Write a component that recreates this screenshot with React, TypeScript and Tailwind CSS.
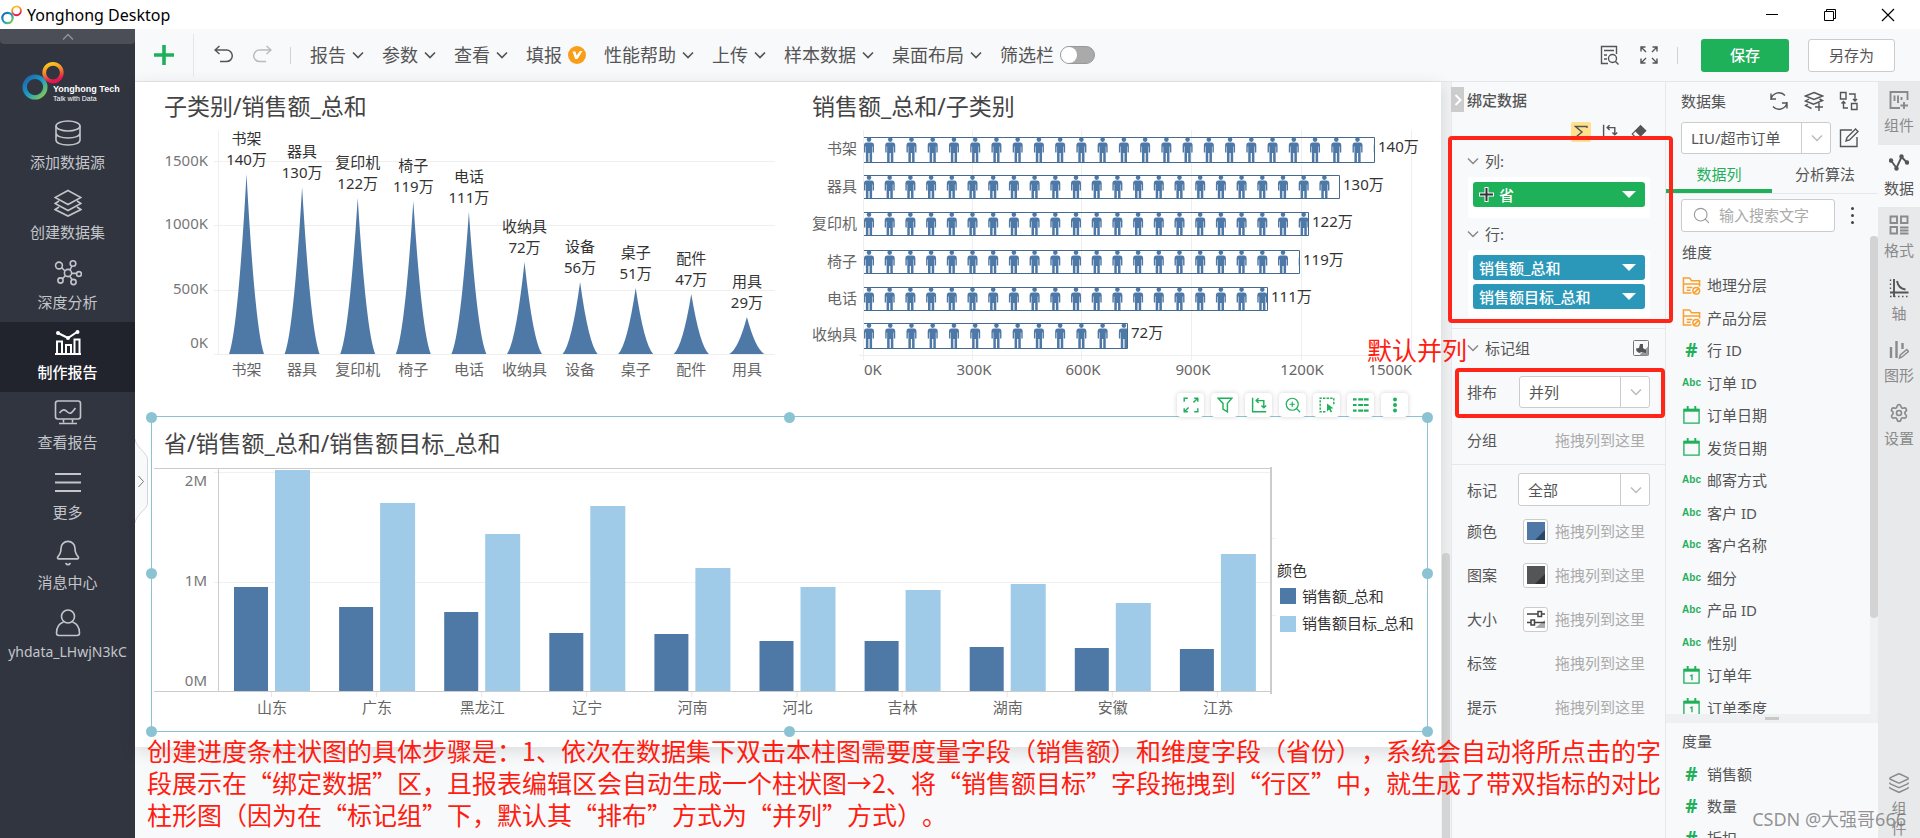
import type { ReactNode } from 'react'
import { Bell, Layers, Search, Settings, ZoomIn } from 'lucide-react'

const BLUE = '#4e79a7'
const LIGHT_BLUE = '#a0cbe8'

const menus = ['报告', '参数', '查看', '填报', '性能帮助', '上传', '样本数据', '桌面布局']

const cones = [
  { name: '书架', value: '140万', top: 174 },
  { name: '器具', value: '130万', top: 187 },
  { name: '复印机', value: '122万', top: 198 },
  { name: '椅子', value: '119万', top: 201 },
  { name: '电话', value: '111万', top: 212 },
  { name: '收纳具', value: '72万', top: 262 },
  { name: '设备', value: '56万', top: 282 },
  { name: '桌子', value: '51万', top: 288 },
  { name: '配件', value: '47万', top: 294 },
  { name: '用具', value: '29万', top: 317 },
]

const people = [
  { name: '书架', value: '140万', top: 137, height: 26, right: 1375, step: 21.24 },
  { name: '器具', value: '130万', top: 175, height: 24, right: 1340, step: 20.7 },
  { name: '复印机', value: '122万', top: 212, height: 24, right: 1309, step: 20.7 },
  { name: '椅子', value: '119万', top: 250, height: 24, right: 1300, step: 20.7 },
  { name: '电话', value: '111万', top: 287, height: 24, right: 1268, step: 20.7 },
  { name: '收纳具', value: '72万', top: 323, height: 26, right: 1128, step: 21.24 },
]

const provinces = [
  { name: '山东', sales: 587, target: 470 },
  { name: '广东', sales: 607, target: 503 },
  { name: '黑龙江', sales: 612, target: 534 },
  { name: '辽宁', sales: 633, target: 506 },
  { name: '河南', sales: 634, target: 568 },
  { name: '河北', sales: 641, target: 587 },
  { name: '吉林', sales: 641, target: 590 },
  { name: '湖南', sales: 647, target: 584 },
  { name: '安徽', sales: 648, target: 603 },
  { name: '江苏', sales: 649, target: 554 },
]

const dimensions = [
  { kind: 'folder', name: '地理分层' },
  { kind: 'folder', name: '产品分层' },
  { kind: 'number', name: '行 ID' },
  { kind: 'text', name: '订单 ID' },
  { kind: 'date', name: '订单日期' },
  { kind: 'date', name: '发货日期' },
  { kind: 'text', name: '邮寄方式' },
  { kind: 'text', name: '客户 ID' },
  { kind: 'text', name: '客户名称' },
  { kind: 'text', name: '细分' },
  { kind: 'text', name: '产品 ID' },
  { kind: 'text', name: '性别' },
  { kind: 'day', name: '订单年' },
  { kind: 'day', name: '订单季度' },
]

const measures = ['销售额', '数量', '折扣']

function Icon({ size = 20, box = 20, width = 1.4, children }: { size?: number; box?: number; width?: number; children: ReactNode }) {
  return (
    <svg width={size} height={size} viewBox={`0 0 ${box} ${box}`} fill="none" stroke="currentColor" strokeWidth={width} className="shrink-0" aria-hidden="true">
      {children}
    </svg>
  )
}

function Chevron({ className = '', width = 1.5 }: { className?: string; width?: number }) {
  return (
    <svg width="12" height="8" viewBox="0 0 12 8" fill="none" stroke="currentColor" strokeWidth={width} className={`shrink-0 ${className}`} aria-hidden="true">
      <path d="m1 1.500 5 5 5-5" />
    </svg>
  )
}

function Rings({ className }: { className: string }) {
  return (
    <svg viewBox="0 0 40 38" className={className} fill="none" aria-hidden="true">
      <defs>
        <linearGradient id="cool" x1="0" y1="0" x2="1" y2="1">
          <stop offset="0" stopColor="#1d62ad" />
          <stop offset="0.5" stopColor="#1d9bc4" />
          <stop offset="1" stopColor="#8fcf4b" />
        </linearGradient>
        <linearGradient id="warm" x1="0" y1="0" x2="0.3" y2="1">
          <stop offset="0" stopColor="#fbd21a" />
          <stop offset="0.5" stopColor="#f28a2c" />
          <stop offset="1" stopColor="#e8154f" />
        </linearGradient>
      </defs>
      <circle cx="28.200" cy="11.400" r="8" stroke="url(#warm)" strokeWidth="3.400" />
      <circle cx="11.800" cy="24.500" r="9.400" stroke="url(#cool)" strokeWidth="4" />
    </svg>
  )
}

const navItems = [
  {
    label: '添加数据源',
    icon: (
      <Icon size={28} box={28} width={1.6}>
        <ellipse cx="14" cy="7" rx="12" ry="5" />
        <path d="M2 7v14c0 3 5 5 12 5s12-2 12-5V7M2 14c0 3 5 5 12 5s12-2 12-5" />
      </Icon>
    ),
  },
  {
    label: '创建数据集',
    icon: (
      <Icon size={28} box={28} width={1.6}>
        <path d="M14 1.500 27 8.500 14 15.500 1 8.500zM5 12l-4 2.500L14 21.500 27 14.500 23 12M5 18l-4 2.500L14 27 27 20.500 23 18" />
      </Icon>
    ),
  },
  {
    label: '深度分析',
    icon: (
      <Icon size={28} box={28} width={1.6}>
        <circle cx="14" cy="14" r="3.6" />
        <circle cx="5" cy="6.500" r="3.400" />
        <circle cx="19" cy="4.500" r="2.800" />
        <circle cx="25" cy="15" r="2.400" />
        <circle cx="6.500" cy="21.500" r="2.600" />
        <circle cx="19.500" cy="23" r="2.600" />
        <path d="M7.500 8.500 11 12M16 11l2-4M17.600 14.400h5M11.500 16.500l-3 3.200M15.800 17.200l2.400 3.500" />
      </Icon>
    ),
  },
  {
    label: '制作报告',
    active: true,
    icon: (
      <Icon size={28} box={28} width={2}>
        <path d="M1 25h26M3 25V12.500h5V25M12 25v-9h5v9M20.500 25V10.500h5V25M4 4l10 5 9-6" />
        <circle cx="4" cy="4" r="1" fill="currentColor" />
        <circle cx="14" cy="9" r="1" fill="currentColor" />
        <circle cx="23.500" cy="3" r="1" fill="currentColor" />
      </Icon>
    ),
  },
  {
    label: '查看报告',
    icon: (
      <Icon size={28} box={28} width={1.6}>
        <rect x="1.500" y="2" width="25" height="18" rx="2.500" />
        <path d="M5.500 14c3-4 5-4 8-1s5 0 8-4M9.500 20.500v3M18.500 20.500v3M5 24.500h18" />
      </Icon>
    ),
  },
  {
    label: '更多',
    icon: (
      <Icon size={28} box={28} width={1.8}>
        <path d="M1 5h26M1 13.500h26M1 22h26" />
      </Icon>
    ),
  },
  { label: '消息中心', icon: <Bell size={28} strokeWidth={1.4} /> },
  {
    label: 'yhdata_LHwjN3kC',
    icon: (
      <Icon size={28} box={28} width={1.6}>
        <circle cx="14" cy="7.500" r="6.500" />
        <path d="M9.500 13C5 14.500 2.500 19 2.500 24q0 2.500 2.500 2.500h18q2.500 0 2.500-2.500c0-5-2.500-9.500-7-11" />
      </Icon>
    ),
  },
]

function TitleBar() {
  return (
    <header className="flex h-[29px] shrink-0 items-center bg-white text-black">
      <Rings className="ml-px h-[22px] w-[22px]" />
      <span className="ml-1 text-base">Yonghong Desktop</span>
      <div className="ml-auto flex gap-[34px] pr-5">
        <button type="button" aria-label="最小化" className="flex w-6 justify-center">
          <Icon size={14} box={14} width={1}><path d="M1 6.500h12" /></Icon>
        </button>
        <button type="button" aria-label="还原" className="flex w-6 justify-center">
          <Icon size={14} box={14} width={1}><path d="M1.500 3.500h9v9h-9zM3.500 3.500v-2h9v9h-2" /></Icon>
        </button>
        <button type="button" aria-label="关闭" className="flex w-6 justify-center">
          <Icon size={14} box={14} width={1.2}><path d="M1 1l12 12M13 1 1 13" /></Icon>
        </button>
      </div>
    </header>
  )
}

function Sidebar() {
  return (
    <aside className="w-[135px] shrink-0 bg-[#313540] text-[#c3c5c9]">
      <button type="button" aria-label="收起" className="flex h-[15px] w-full items-center justify-center rounded-b bg-[#4b4d57] text-[#90929a]">
        <Chevron className="rotate-180" />
      </button>
      <div className="flex h-[68px] pt-4 pl-[22px]">
        <Rings className="h-[42px] w-[44px] shrink-0" />
        <div className="-ml-[13px] pt-6 font-['Liberation_Sans'] text-white">
          <div className="text-[9px] leading-[11px] font-bold whitespace-nowrap">Yonghong Tech</div>
          <div className="text-[7px] leading-2 whitespace-nowrap">Talk with Data</div>
        </div>
      </div>
      <nav>
        {navItems.map((item) => (
          <a
            key={item.label}
            href="#"
            className={`flex h-[70px] flex-col items-center pt-[7px] text-[15px] ${item.active ? 'bg-[#22242d] font-medium text-white' : ''}`}
          >
            {item.icon}
            <span className={`mt-1 leading-[22px] ${item.label.startsWith('yh') ? 'text-sm' : ''}`}>{item.label}</span>
          </a>
        ))}
      </nav>
    </aside>
  )
}

function Toolbar() {
  return (
    <div className="flex h-[53px] shrink-0 items-center border-b border-[#e4e6ec] bg-[#f8f9fb] text-[#555]">
      <button type="button" aria-label="新建" className="flex w-[58px] justify-center text-[#1fb05a]">
        <Icon size={22} box={22} width={3.6}><path d="M11 1v20M1 11h20" /></Icon>
      </button>
      <span className="h-[43px] w-px bg-[#e4e6ea]" />
      <button type="button" aria-label="撤销" className="ml-5">
        <Icon width={1.5}><path d="M5.500 1 1 5l4.500 4M1 5h11.500a5.800 5.800 0 0 1 0 11.600H6" /></Icon>
      </button>
      <button type="button" aria-label="重做" className="ml-[18px] text-[#bbb]">
        <Icon width={1.5}><path d="M14.500 1 19 5l-4.500 4M19 5H7.500a5.800 5.800 0 0 0 0 11.600H14" /></Icon>
      </button>
      <span className="ml-[18px] h-[17px] w-px bg-[#d0d2d6]" />
      <div className="ml-[19px] flex items-center gap-[18px] text-lg whitespace-nowrap">
        {menus.map((menu) => (
          <button key={menu} type="button" className="flex items-center gap-[6px]">
            {menu}
            {menu === '填报' ? (
              <svg width="18" height="18" viewBox="0 0 18 18" aria-hidden="true">
                <circle cx="9" cy="9" r="9" fill="#fa9e18" />
                <path d="M4.500 5.500h3l1 4 3.500-4.500h2.500L9.500 13H7.200z" fill="#fff" />
              </svg>
            ) : (
              <Chevron width={1.7} />
            )}
          </button>
        ))}
        <label className="flex items-center gap-[6px]">
          筛选栏
          <input type="checkbox" className="peer sr-only" />
          <span className="flex h-[18px] w-[35px] items-center rounded-full border border-[#999] bg-[#aaa]">
            <span className="h-4 w-4 rounded-full bg-white" />
          </span>
        </label>
      </div>
      <div className="ml-auto flex items-center pr-[25px]">
        <button type="button" aria-label="预览">
          <Icon>
            <path d="M8 18.500H1.500v-17h15V9M4 5.500h10M4 10h3M4 14h3" />
            <circle cx="12.500" cy="13.500" r="4" />
            <path d="m15.500 16.500 3 3" />
          </Icon>
        </button>
        <button type="button" aria-label="全屏" className="ml-[19px]">
          <Icon><path d="M2 6.500V2h4.500M2 2l5 5M13.500 2H18v4.500M18 2l-5 5M2 13.500V18h4.500M2 18l5-5M18 13.500V18h-4.500M18 18l-5-5" /></Icon>
        </button>
        <span className="ml-[18px] h-[17px] w-px bg-[#d0d2d6]" />
        <button type="button" className="ml-[23px] h-[33px] w-[88px] rounded-[3px] bg-[#1fb05a] text-[15px] font-medium text-white">保存</button>
        <button type="button" className="ml-[19px] h-[33px] w-[87px] rounded-[3px] border border-[#ccc] bg-white text-[15px]">另存为</button>
      </div>
    </div>
  )
}

function ConeChart() {
  const grid = [
    { label: '1500K', y: 161, text: 161 },
    { label: '1000K', y: 225, text: 224 },
    { label: '500K', y: 290, text: 289 },
    { label: '0K', y: 354, text: 343 },
  ]
  return (
    <svg viewBox="135 122 653 282" className="block w-full" fontSize="15" fill="#666">
      <path d="M218.500 131v224" stroke="#efefef" />
      {grid.map((g) => (
        <g key={g.label}>
          <path d={`M214 ${g.y + 0.5}h561`} stroke="#efefef" />
          <text x="208" y={g.text + 5} textAnchor="end" fill="#777">{g.label}</text>
        </g>
      ))}
      {cones.map((c, i) => {
        const x = 246.5 + i * 55.6
        const h = 354 - c.top
        return (
          <g key={c.name} textAnchor="middle">
            <path
              d={`M${x - 17.5} 354Q${x - 8.5} ${354 - h * 0.14} ${x} ${c.top}Q${x + 8.5} ${354 - h * 0.14} ${x + 17.5} 354z`}
              fill={BLUE}
            />
            <text x={x} y={c.top - 30} fill="#333">{c.name}</text>
            <text x={x} y={c.top - 9} fill="#333">{c.value}</text>
            <text x={x} y="375">{c.name}</text>
          </g>
        )
      })}
    </svg>
  )
}

function PeopleChart() {
  const ticks = [
    { label: '0K', x: 864, text: 864, anchor: 'start' },
    { label: '300K', x: 973, text: 974, anchor: 'middle' },
    { label: '600K', x: 1082, text: 1083, anchor: 'middle' },
    { label: '900K', x: 1192, text: 1193, anchor: 'middle' },
    { label: '1200K', x: 1302, text: 1302, anchor: 'middle' },
    { label: '1500K', x: 1412, text: 1412, anchor: 'end' },
  ] as const
  return (
    <svg viewBox="788 122 653 282" className="block w-full" fontSize="15" fill="#666">
      <defs>
        <g id="person" fill={BLUE}>
          <circle cx="5" cy="2.600" r="2.300" />
          <path d="M2.500 5.500h5q2.500 0 2.500 3v7H8.600V9.500h-.5V25H5.600v-9h-1.200v9H1.900V9.500h-.5v6H0v-7q0-3 2.500-3z" />
        </g>
      </defs>
      <path d="M859 355.500h553" stroke="#efefef" />
      {ticks.map((t) => (
        <g key={t.label}>
          <path d={`M${t.x - 0.5} 130v230`} stroke="#efefef" />
          <text x={t.text} y="375" textAnchor={t.anchor}>{t.label}</text>
        </g>
      ))}
      {people.map((p) => {
        const width = p.right - 864
        const count = Math.ceil(width / p.step)
        return (
          <g key={p.name}>
            <text x="857" y={p.top + 17} textAnchor="end">{p.name}</text>
            <svg x="864" y={p.top} width={width} height={p.height}>
              {Array.from({ length: count }, (_, i) => (
                <use key={i} href="#person" x={i * p.step} y="0" />
              ))}
            </svg>
            <path d={`M864 ${p.top + 0.5}H${p.right - 0.5}v${p.height - 1}H864`} fill="none" stroke="#446a92" />
            <text x={p.right + 3} y={p.top + 15} fill="#333">{p.value}</text>
          </g>
        )
      })}
    </svg>
  )
}

function ProvinceChart() {
  return (
    <svg viewBox="152 465 1275 266" className="block w-full" fontSize="15" fill="#666">
      <path d="M214 472.500h1057M214 582.500h1057" stroke="#f0f0f0" />
      <path d="M1271 538.500h5M1271 615.500h5" stroke="#f0f0f0" />
      <path d="M154 468.500h1117M218.500 468v224" stroke="#ccc" fill="none" />
      <path d="M1271 467v227" stroke="#ccc" strokeWidth="2" />
      <text x="207" y="486" textAnchor="end" fill="#777">2M</text>
      <text x="207" y="586" textAnchor="end" fill="#777">1M</text>
      <text x="207" y="686" textAnchor="end" fill="#777">0M</text>
      {provinces.map((p, i) => {
        const x = 234 + i * 105.1
        return (
          <g key={p.name}>
            <rect x={x} y={p.sales} width="34" height={691 - p.sales} fill={BLUE} />
            <rect x={x + 41} y={p.target} width="35" height={691 - p.target} fill={LIGHT_BLUE} />
            <path d={`M${x + 37.5} 692v5`} stroke="#e6e6e6" />
            <text x={x + 38} y="713" textAnchor="middle">{p.name}</text>
          </g>
        )
      })}
      <path d="M154 691.500h1117" stroke="#ccc" />
      <g fill="#333">
        <text x="1277" y="576">颜色</text>
        <text x="1302" y="602">销售额_总和</text>
        <text x="1302" y="629">销售额目标_总和</text>
      </g>
      <rect x="1280" y="588" width="16" height="16" fill={BLUE} />
      <rect x="1280" y="616" width="16" height="16" fill={LIGHT_BLUE} />
    </svg>
  )
}

const chartTools = [
  { label: '放大', icon: <path d="M1.500 6V1.500H6M14 1.500h4.500V6M18 2l-5 5M18.500 14v4.500H14M6 18.500H1.500V14M2 18l5-5" /> },
  { label: '筛选', icon: <path d="M1.500 1.500h17L13 8v10.500L7.500 15V8z" /> },
  { label: '转置', icon: <path d="M2 1v17.500h17M9.500 1.500 6.500 4.500l3 3M7 4.500h9v9M13 10.500l3 3 3-3" /> },
  { label: '缩放', icon: null },
  {
    label: '选择',
    icon: (
      <>
        <path d="M18.500 9V1.500h-17v17H9" strokeDasharray="3 1.500" />
        <path d="m10 8 8 6-3.500.7 2 3.600-1.800 1-2-3.600L10 18z" fill="currentColor" stroke="none" />
      </>
    ),
  },
  { label: '明细', icon: <path d="M0 3h4.500M6.500 3H20M0 10h4.500M6.500 10H20M0 17h4.500M6.500 17H20" strokeWidth="2.600" strokeDasharray="6 1" /> },
  {
    label: '更多操作',
    icon: (
      <g fill="currentColor" stroke="none">
        <circle cx="10" cy="3" r="2.500" />
        <circle cx="10" cy="10" r="2.500" />
        <circle cx="10" cy="17" r="2.500" />
      </g>
    ),
  },
]

const handles = [
  '-left-[6px] -top-[5px]',
  'left-1/2 -ml-[6px] -top-[5px]',
  '-right-[6px] -top-[5px]',
  '-left-[6px] top-1/2 -mt-[6px]',
  '-right-[6px] top-1/2 -mt-[6px]',
  '-left-[6px] -bottom-[6px]',
  'left-1/2 -ml-[6px] -bottom-[6px]',
  '-right-[6px] -bottom-[6px]',
]

function Canvas() {
  return (
    <main className="relative flex min-w-0 flex-1 flex-col bg-[#f8f9fb]">
      <div className="relative bg-white pb-[15px] shadow-[0_4px_16px_rgba(0,0,0,0.12)]">
        <div className="grid grid-cols-2">
          <section>
            <h2 className="pt-2 pl-[29px] text-[23px] leading-8 text-[#444]">子类别/销售额_总和</h2>
            <ConeChart />
          </section>
          <section>
            <h2 className="pt-2 pl-6 text-[23px] leading-8 text-[#444]">销售额_总和/子类别</h2>
            <PeopleChart />
          </section>
        </div>
        <section className="relative mt-3 mr-[13px] ml-4 border border-[#8cc3d3] bg-white">
          <h2 className="px-3 pt-[10px] pb-[6px] text-[23px] leading-8 text-[#444]">省/销售额_总和/销售额目标_总和</h2>
          <ProvinceChart />
          <div className="absolute right-[19px] bottom-full flex gap-[7px]">
            {chartTools.map((tool) => (
              <button
                key={tool.label}
                type="button"
                aria-label={tool.label}
                className="flex h-6 w-[27px] items-center justify-center rounded bg-white text-[#1fb05a] shadow-[0_0_5px_rgba(0,0,0,0.18)]"
              >
                {tool.icon ? <Icon size={16} width={1.8}>{tool.icon}</Icon> : <ZoomIn size={18} strokeWidth={1.6} />}
              </button>
            ))}
          </div>
          {handles.map((h) => (
            <span key={h} className={`absolute h-[11px] w-[11px] rounded-full bg-[#8cc3d3] ${h}`} />
          ))}
        </section>
      </div>
      <button type="button" aria-label="展开" className="absolute top-[356px] left-0 text-[#888]">
        <svg width="14" height="86" viewBox="0 0 14 86" fill="none" stroke="#d3d6dc" aria-hidden="true">
          <path d="M0 1c1 8 12 14 12.500 20v45C12 71 1 77 0 85" fill="#f8f9fb" />
          <path d="m3.500 38 5 5.500-5 5.500" stroke="#777" />
        </svg>
      </button>
      <p className="absolute top-[652px] left-3 z-20 font-['Noto_Sans_CJK_SC',sans-serif] text-[25px] leading-8 whitespace-nowrap text-[#ff1c10] [text-spacing-trim:space-all]">
        创建进度条柱状图的具体步骤是：1、依次在数据集下双击本柱图需要度量字段（销售额）和维度字段（省份），系统会自动将所点击的字
        <br />
        段展示在“绑定数据”区，且报表编辑区会自动生成一个柱状图→2、将“销售额目标”字段拖拽到“行区”中，就生成了带双指标的对比
        <br />
        柱形图（因为在“标记组”下，默认其“排布”方式为“并列”方式）。
      </p>
    </main>
  )
}

function Select({ label, value, className }: { label: string; value: string; className: string }) {
  return (
    <div className={`relative ${className}`}>
      <select aria-label={label} className="h-full w-full appearance-none rounded-[3px] border border-[#ccc] bg-white pl-[9px] text-[15px] text-[#555]">
        <option>{value}</option>
      </select>
      <span className="pointer-events-none absolute inset-y-0 right-0 flex w-[30px] items-center justify-center border-l border-[#ccc] text-[#bbb]">
        <Chevron />
      </span>
    </div>
  )
}

function Pill({ name, color, dragging }: { name: string; color: string; dragging?: boolean }) {
  return (
    <button type="button" className={`flex h-[25px] items-center rounded-[3px] pr-[9px] pl-[6px] text-[15px] font-medium text-white ${color}`}>
      {dragging && (
        <svg width="15" height="15" viewBox="0 0 15 15" className="mr-[5px]" aria-hidden="true">
          <path d="M7.500 0v15M0 7.500h15" stroke="#fff" strokeWidth="4" />
          <path d="M7.500 1v13M1 7.500h13" stroke="#333" strokeWidth="2" />
        </svg>
      )}
      {name}
      <svg width="14" height="7" viewBox="0 0 14 7" className="ml-auto" aria-hidden="true">
        <path d="M0 0h14L7 7z" fill="#fff" />
      </svg>
    </button>
  )
}

function GroupTitle({ children }: { children: ReactNode }) {
  return (
    <button type="button" className="flex items-center gap-[6px] text-[#555]">
      <Chevron className="text-[#888]" />
      {children}
    </button>
  )
}

function MarkRow({ label, swatch }: { label: string; swatch?: ReactNode }) {
  return (
    <div className="flex h-11 items-center pr-5 pl-[15px]">
      <span>{label}</span>
      {swatch && (
        <button type="button" aria-label={label} className="ml-[26px] flex h-[25px] w-[25px] items-center justify-center rounded-[3px] border border-[#ccc] bg-white">
          {swatch}
        </button>
      )}
      <span className="ml-auto text-[#aaa]">拖拽列到这里</span>
    </div>
  )
}

function BindPanel() {
  return (
    <section className="relative w-[215px] shrink-0 border-x border-[#e6e7ea] bg-[#f8f9fb] text-[15px] leading-[22px] text-[#555]">
      <div className="flex h-9 items-center pl-[15px]">
        <button type="button" aria-label="折叠面板" className="absolute top-[5px] -left-px flex h-[25px] w-[13px] items-center justify-center bg-[#ccc] text-white">
          <Chevron className="-rotate-90" width={2} />
        </button>
        <h3 className="font-medium">绑定数据</h3>
      </div>
      <div className="flex h-7 items-center justify-end gap-[9px] pr-4">
        <button type="button" aria-label="聚合" className="flex h-5 w-5 items-center justify-center rounded-[2px] bg-[#ffe08c]">
          <Icon size={14} box={14}><path d="M13 3V1.500H1.500L8 7l-6.500 5.500H13V11" /></Icon>
        </button>
        <button type="button" aria-label="行列转置" className="flex w-5 justify-center">
          <Icon size={16} width={1.8}><path d="M2 1v17.500h17M9.500 1.500 6.500 4.500l3 3M7 4.500h9v9M13 10.500l3 3 3-3" /></Icon>
        </button>
        <button type="button" aria-label="清除" className="flex w-5 justify-center">
          <Icon size={16}>
            <path d="M12 2 18.500 8.500 12 15 5.500 8.500z" fill="currentColor" />
            <path d="M5.500 8.500 1.500 12.500 6 17h3.500l2.500-2" />
          </Icon>
        </button>
      </div>
      <div className="flex h-[30px] items-center pl-[15px]"><GroupTitle>列:</GroupTitle></div>
      <div className="mt-px mr-[15px] ml-4 flex h-[41px] flex-col rounded-[3px] bg-white p-[5px]">
        <Pill name="省" color="bg-[#1fb05a]" dragging />
      </div>
      <div className="flex h-8 items-center pl-[15px]"><GroupTitle>行:</GroupTitle></div>
      <div className="mr-[15px] mb-[10px] ml-4 flex h-[68px] flex-col gap-1 rounded-[3px] bg-white p-[5px]">
        <Pill name="销售额_总和" color="bg-[#2b98ba]" />
        <Pill name="销售额目标_总和" color="bg-[#2b98ba]" />
      </div>
      <div className="flex h-[38px] items-center justify-between border-t border-[#e6e7ea] pr-4 pl-[15px]">
        <GroupTitle>标记组</GroupTitle>
        <button type="button" aria-label="图表类型">
          <svg width="16" height="16" viewBox="0 0 16 16" aria-hidden="true">
            <rect x="0.500" y="0.500" width="15" height="15" rx="1" fill="#f8f9fb" stroke="#777" />
            <path d="M6 15.500 15.500 6v9.500z" fill="#999" />
            <path d="M3 8.500 6 8l1-4h3v4l3 2v3l-4-1-3 1-2.500-2z" fill="#555" />
          </svg>
        </button>
      </div>
      <div className="flex h-[50px] items-center justify-between pt-[2px] pr-[15px] pl-[15px]">
        <span>排布</span>
        <Select label="排布" value="并列" className="h-8 w-[131px]" />
      </div>
      <div className="flex h-[49px] items-center justify-between border-b border-[#e6e7ea] pr-5 pl-[15px]">
        <span>分组</span>
        <span className="text-[#aaa]">拖拽列到这里</span>
      </div>
      <div className="flex h-11 items-center justify-between pt-[5px] pr-[15px] pl-[15px]">
        <span>标记</span>
        <Select label="标记" value="全部" className="h-[33px] w-[132px]" />
      </div>
      <MarkRow
        label="颜色"
        swatch={<svg width="18" height="18" aria-hidden="true"><path d="M0 0h18v18H0z" fill={BLUE} /><path d="M18 8v10H8z" fill="#2c4766" /></svg>}
      />
      <MarkRow
        label="图案"
        swatch={<svg width="18" height="18" aria-hidden="true"><path d="M0 0h18v18H0z" fill="#555" /><path d="M18 8v10H8z" fill="#333" /></svg>}
      />
      <MarkRow
        label="大小"
        swatch={
          <svg width="18" height="18" fill="none" stroke="#444" strokeWidth="1.500" aria-hidden="true">
            <path d="M18 10v8H8z" fill="#aaa" stroke="none" />
            <path d="M0 4h10.500M14.500 4H18M0 12.500h4M8 12.500h10M11 1.500h3.500v5H11zM4 10h3.500v5H4z" />
          </svg>
        }
      />
      <MarkRow label="标签" />
      <MarkRow label="提示" />
      <div className="pointer-events-none absolute top-[54px] -left-1 z-10 h-[187px] w-[225px] rounded border-4 border-[#ff2518]" />
      <div className="pointer-events-none absolute top-[286px] left-[3px] z-10 h-[50px] w-[210px] rounded border-4 border-[#ff2518]" />
      <span className="absolute top-[252px] right-[198px] z-10 text-[25px] leading-8 whitespace-nowrap text-[#ff1c10]">默认并列</span>
    </section>
  )
}

function FieldIcon({ kind }: { kind: string }) {
  if (kind === 'number') return <span className="w-[19px] text-center text-[19px] font-bold text-[#1fb05a]">#</span>
  if (kind === 'text') return <span className="w-[19px] text-center font-['Liberation_Sans'] text-[10px] font-bold text-[#1fb05a]">Abc</span>
  if (kind === 'folder') {
    return (
      <span className="text-[#f7a131]">
        <Icon size={19} width={1.6}>
          <path d="M10 18H1.500V2H8l2 3h8.500v6M1.500 8.500h17M5 12h6M5 15h4" />
          <circle cx="15" cy="15.500" r="3.500" />
          <path d="m12.500 18 5-5" />
        </Icon>
      </span>
    )
  }
  return (
    <span className="text-[#1fb05a]">
      <Icon size={19} width={1.4}>
        <path d="M2 3.500h16v14.500H2z" />
        <path d="M2 4.500h16" strokeWidth="3" />
        <path d="M6 0v4M14 0v4" strokeWidth="2" />
        {kind === 'day' && <path d="M8.500 10.500 10.500 9.500V15" />}
      </Icon>
    </span>
  )
}

function Field({ kind, name }: { kind: string; name: string }) {
  return (
    <li className="flex items-center gap-[6px] pl-4">
      <FieldIcon kind={kind} />
      {name}
    </li>
  )
}

function DataPanel() {
  return (
    <section className="flex w-[212px] shrink-0 flex-col bg-[#f8f9fb] text-[15px] leading-[22px] text-[#555]">
      <div className="flex h-10 shrink-0 items-center pr-[19px] pb-[2px] pl-[15px]">
        <h3 className="mr-auto">数据集</h3>
        <div className="flex gap-[15px]">
          <button type="button" aria-label="刷新">
            <Icon><path d="M2 9a8 8 0 0 1 14-4.500M18 11a8 8 0 0 1-14 4.500M2 2.500V8h5M18 17.500V12h-5" /></Icon>
          </button>
          <button type="button" aria-label="添加数据集">
            <Icon><path d="M10 1.500 18.500 5 10 8.500 1.500 5zM5 8 1.500 10l8 3.200 9-3.700L15.500 8M4 13l-2.500 1.500 6 3M15 12v8M11 16h8" /></Icon>
          </button>
          <button type="button" aria-label="切换数据集">
            <Icon><path d="M1.500 1.500H7V8H1.500zM12.500 12.500H18V18.500h-5.500zM10 3H16v6.500M14 8l2 2 2-2M4.500 10.500V17H9M2.500 12.500l2-2 2 2" /></Icon>
          </button>
        </div>
      </div>
      <div className="flex h-8 shrink-0 items-center justify-between pr-[19px] pl-[15px]">
        <Select label="数据集" value="LIU/超市订单" className="h-8 w-[150px]" />
        <button type="button" aria-label="编辑">
          <Icon><path d="M13 2H1.500v16.500H18V9M7 13l1-3.500 8.500-8.500 2.500 2.500-8.500 8.500z" /></Icon>
        </button>
      </div>
      <div className="grid h-10 shrink-0 grid-cols-2 border-b border-[#e6e7ea]">
        <button type="button" className="border-b-4 border-[#1fb05a] pt-1 text-[#1fb05a]">数据列</button>
        <button type="button" className="border-b-4 border-transparent pt-1">分析算法</button>
      </div>
      <div className="flex h-[42px] shrink-0 items-center pl-[15px]">
        <label className="flex h-[33px] w-[154px] items-center gap-2 rounded-[3px] border border-[#ccc] bg-white pr-2 pl-[10px]">
          <Search size={19} strokeWidth={1.4} className="shrink-0 text-[#999]" />
          <input type="text" aria-label="搜索" placeholder="输入搜索文字" className="w-full min-w-0 outline-none placeholder:text-[#aaa]" />
        </label>
        <button type="button" aria-label="更多" className="ml-4 flex flex-col gap-1">
          <span className="h-[3px] w-[3px] rounded-full bg-[#444]" />
          <span className="h-[3px] w-[3px] rounded-full bg-[#444]" />
          <span className="h-[3px] w-[3px] rounded-full bg-[#444]" />
        </button>
      </div>
      <div className="flex min-h-0 flex-1">
        <div className="min-w-0 flex-1 overflow-hidden">
          <h4 className="h-[33px] pl-4 leading-8">维度</h4>
          <ul className="grid h-[455px] auto-rows-fr">
            {dimensions.map((d) => <Field key={d.name} {...d} />)}
          </ul>
        </div>
        <div className="w-2 bg-[#f0f1f3]">
          <div className="h-4/5 rounded-full bg-[#d3d3d3]" />
        </div>
      </div>
      <div className="flex h-[9px] shrink-0 items-center justify-center bg-[#eff0f2]">
        <span className="h-[3px] w-[14px] bg-[#c8c8c8]" />
      </div>
      <div className="h-[115px] shrink-0 overflow-hidden pt-[2px]">
        <h4 className="h-[33px] pl-4 leading-8">度量</h4>
        <ul className="grid h-24 auto-rows-fr">
          {measures.map((m) => <Field key={m} kind="number" name={m} />)}
        </ul>
      </div>
    </section>
  )
}

const railItems = [
  { label: '组件', icon: <path d="M11 18H1.500V2h17v8M5.500 5.500V11M9 5.500V13M12.500 7V10M15 12v7M11.500 15.500h7.500" /> },
  {
    label: '数据',
    active: true,
    icon: (
      <>
        <path d="M2 7.500 7.500 15 12.500 4 18 9.500" />
        <g fill="currentColor" stroke="none">
          <circle cx="2" cy="7.500" r="2.200" />
          <circle cx="7.500" cy="15.500" r="2.200" />
          <circle cx="12.500" cy="3.500" r="2.200" />
          <circle cx="18" cy="9.500" r="2.200" />
        </g>
      </>
    ),
  },
  { label: '格式', icon: <path d="M1.500 1.500h6.500v6.500H1.500zM12 1.500h6.500v6.500H12zM1.500 12h6.500v6.500H1.500zM11 12.500h8.500M11 15.500h8.500M11 18.500h8.500" /> },
  {
    label: '轴',
    icon: (
      <g stroke="#555">
        <path d="M5 1v18M1 14.500h18.500M8 3c1 5 4 8 8.500 8.500" />
        <path d="M1.500 1.500v12M1 18.500h18" strokeWidth="1.400" strokeDasharray="1.500 2.500" />
      </g>
    ),
  },
  { label: '图形', icon: <><path d="M2 7v11M7.500 1v17M13.500 3v6" strokeWidth="2.400" /><path d="m10.500 18 .8-3 6.500-5.500 1.700 2-6.500 5.500z" strokeWidth="1.400" /></> },
]

function Rail() {
  return (
    <nav className="flex w-[42px] shrink-0 flex-col bg-[#e8e9eb] text-[15px] text-[#8a8a8a]">
      <div className="grid h-[375px] auto-rows-fr">
        {railItems.map((item) => (
          <button key={item.label} type="button" className={`flex flex-col items-center pt-2 leading-5 ${item.active ? 'bg-[#f8f9fb] text-[#555]' : ''}`}>
            <Icon width={1.9}>{item.icon}</Icon>
            <span className="mt-[5px]">{item.label}</span>
          </button>
        ))}
        <button type="button" className="flex flex-col items-center pt-2 leading-5">
          <Settings size={20} strokeWidth={2} />
          <span className="mt-[5px]">设置</span>
        </button>
      </div>
      <button type="button" className="mt-auto flex flex-col items-center leading-5">
        <Layers size={22} strokeWidth={1.6} />
        <span className="mt-1 w-4">组件</span>
      </button>
    </nav>
  )
}

export default function App() {
  return (
    <div className="relative flex h-screen flex-col overflow-hidden bg-white font-['Noto_Sans','Noto_Sans_CJK_SC',sans-serif]">
      <TitleBar />
      <div className="flex min-h-0 flex-1">
        <Sidebar />
        <div className="flex min-w-0 flex-1 flex-col">
          <Toolbar />
          <div className="flex min-h-0 flex-1">
            <Canvas />
            <div className="flex w-[10px] shrink-0 flex-col justify-end bg-[#f1f2f4] px-px">
              <div className="h-[285px] rounded-t-full bg-[#d5d5d5]" />
            </div>
            <BindPanel />
            <DataPanel />
            <Rail />
          </div>
        </div>
      </div>
      <span className="absolute right-[14px] bottom-[6px] z-30 text-lg leading-[26px] text-[#777]/80">CSDN @大强哥666</span>
    </div>
  )
}
